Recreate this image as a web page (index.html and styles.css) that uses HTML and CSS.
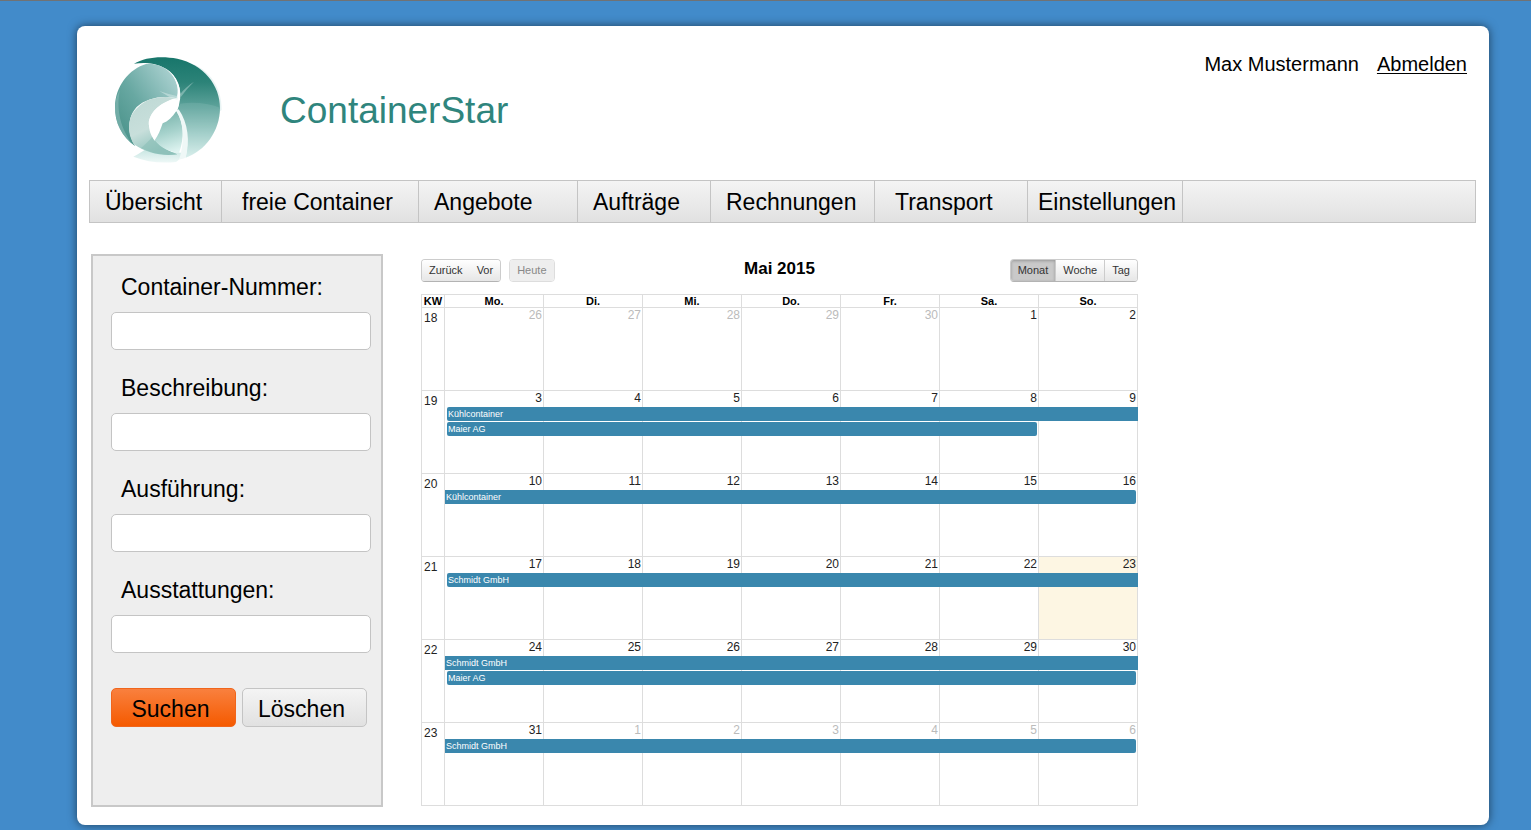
FILE: index.html
```html
<!DOCTYPE html>
<html lang="de">
<head>
<meta charset="utf-8">
<title>ContainerStar</title>
<link rel="stylesheet" href="styles.css">
</head>
<body>
<div class="page">
  <header class="header">
    <svg class="logo" viewBox="0 0 405 390" aria-hidden="true">
      <defs>
        <linearGradient id="dark" x1="0" y1="0" x2="0" y2="1">
          <stop offset="0" stop-color="#17766b"/><stop offset="0.25" stop-color="#2c8378"/><stop offset="0.5" stop-color="#5ea39b"/><stop offset="0.75" stop-color="#9ccbc5"/><stop offset="1" stop-color="#dcf1ee"/>
        </linearGradient>
        <linearGradient id="left" x1="0.9" y1="0.1" x2="0.1" y2="0.8">
          <stop offset="0" stop-color="#a9d0cf"/><stop offset="0.6" stop-color="#68a8a2"/><stop offset="1" stop-color="#4f968e"/>
        </linearGradient>
        <linearGradient id="pale" x1="0" y1="0" x2="0.4" y2="1">
          <stop offset="0" stop-color="#bdd8d4"/><stop offset="0.6" stop-color="#c8dfdb"/><stop offset="1" stop-color="#8fc3bc"/>
        </linearGradient>
        <linearGradient id="petal" x1="0.4" y1="0" x2="0.6" y2="1">
          <stop offset="0" stop-color="#78b3ab"/><stop offset="0.5" stop-color="#a6d2cc"/><stop offset="1" stop-color="#dff4f1"/>
        </linearGradient>
        <linearGradient id="base" x1="0" y1="0" x2="0" y2="1">
          <stop offset="0" stop-color="#b9dfda"/><stop offset="1" stop-color="#eef8f7"/>
        </linearGradient>
      </defs>
      <path d="M280 58C330 78 366 130 365 195L358 200C358 140 330 90 280 58Z" fill="#e9f4f4"/>
      <path d="M102 56C135 36 185 32 232 41C310 58 361 120 360 190C359 260 315 318 257 338C267 290 263 235 232 194C250 150 241 106 208 78C178 55 140 50 102 56Z" fill="url(#dark)"/>
      <path d="M240 176C280 170 325 174 360 188C359 260 315 318 257 338C267 290 263 235 232 194Z" fill="#c9e6e2" opacity="0.14"/>
      <path d="M140 56C185 54 222 80 233 125C236 142 235 155 230 160C190 150 140 158 110 186C83 215 80 262 106 304C65 275 44 232 45 185C46 125 85 72 140 56Z" fill="url(#left)"/>
      <path d="M60 135C50 180 55 240 96 296C60 265 45 227 45 185C46 166 51 150 60 135Z" fill="#8fc0bb" opacity="0.5"/>
      <path d="M208 78C240 106 248 148 232 185L229 162C237 140 235 108 208 78Z" fill="#fff"/>
      <path d="M100 335C120 325 140 312 155 298C185 316 210 322 248 324C243 338 237 346 228 351C180 356 140 350 100 335Z" fill="url(#base)"/>
      <path d="M232 160C190 150 140 158 112 188C82 215 80 262 102 298C140 326 190 334 232 328C180 310 145 275 147 235C149 200 185 170 232 160Z" fill="url(#pale)"/>
      <path d="M146 240C150 280 180 310 232 328C195 331 155 324 123 309C148 290 168 264 178 240Z" fill="#8dc0b9" opacity="0.65"/>
      <path d="M235 158C190 166 148 198 146 235C147 258 154 274 164 287C176 272 180 250 188 235C212 226 232 207 237 178Z" fill="#fff"/>
      <path d="M229 198C217 217 204 229 188 235C182 253 174 273 164 286C182 308 207 321 237 324C254 278 252 232 229 198Z" fill="url(#petal)"/>
      <path d="M229 198L236 193C265 235 270 290 257 338C248 343 242 340 237 345C255 290 252 235 229 198Z" fill="#eff8f7"/>
      <path d="M178 138Q206 148 234 154L232 164L212 158Z" fill="#d7ecea" opacity="0.5"/>
      <path d="M240 148C253 132 267 119 282 110Q259 132 242 157Z" fill="#b3d6d2" opacity="0.5"/>
    </svg>
    <h1 class="brand">ContainerStar</h1>
    <div class="account">
      <span>Max Mustermann</span>
      <a class="logout" href="#">Abmelden</a>
    </div>
  </header>

  <nav class="nav">
    <a href="#">Übersicht</a>
    <a class="inset" href="#">freie Container</a>
    <a href="#">Angebote</a>
    <a href="#">Aufträge</a>
    <a href="#">Rechnungen</a>
    <a class="inset" href="#">Transport</a>
    <a class="tight" href="#">Einstellungen</a>
  </nav>

  <main class="main">
    <form class="search">
      <div class="field"><label for="number">Container-Nummer:</label><input id="number" type="text"></div>
      <div class="field"><label for="description">Beschreibung:</label><input id="description" type="text"></div>
      <div class="field"><label for="version">Ausführung:</label><input id="version" type="text"></div>
      <div class="field"><label for="equipment">Ausstattungen:</label><input id="equipment" type="text"></div>
      <div class="actions">
        <button class="action primary" type="button">Suchen</button>
        <button class="action" type="reset">Löschen</button>
      </div>
    </form>

    <section class="calendar">
      <div class="toolbar">
        <div class="tools">
          <div class="group plain"><button type="button">Zurück</button><button type="button">Vor</button></div>
          <div class="group off"><button type="button" disabled>Heute</button></div>
        </div>
        <h2 class="month">Mai 2015</h2>
        <div class="tools end">
          <div class="group"><button class="active" type="button">Monat</button><button type="button">Woche</button><button type="button">Tag</button></div>
        </div>
      </div>
      <table class="grid">
        <thead>
          <tr><th class="kw">KW</th><th>Mo.</th><th>Di.</th><th>Mi.</th><th>Do.</th><th>Fr.</th><th>Sa.</th><th>So.</th></tr>
        </thead>
        <tbody>
          <tr><th>18</th><td class="other">26</td><td class="other">27</td><td class="other">28</td><td class="other">29</td><td class="other">30</td><td>1</td><td>2</td></tr>
          <tr><th>19</th><td>3<div class="event starts">Kühlcontainer</div><div class="event starts ends days6">Maier AG</div></td><td>4</td><td>5</td><td>6</td><td>7</td><td>8</td><td>9</td></tr>
          <tr><th>20</th><td>10<div class="event ends">Kühlcontainer</div></td><td>11</td><td>12</td><td>13</td><td>14</td><td>15</td><td>16</td></tr>
          <tr><th>21</th><td>17<div class="event starts">Schmidt GmbH</div></td><td>18</td><td>19</td><td>20</td><td>21</td><td>22</td><td class="today">23</td></tr>
          <tr><th>22</th><td>24<div class="event">Schmidt GmbH</div><div class="event starts ends">Maier AG</div></td><td>25</td><td>26</td><td>27</td><td>28</td><td>29</td><td>30</td></tr>
          <tr><th>23</th><td>31<div class="event ends">Schmidt GmbH</div></td><td class="other">1</td><td class="other">2</td><td class="other">3</td><td class="other">4</td><td class="other">5</td><td class="other">6</td></tr>
        </tbody>
      </table>
    </section>
  </main>
</div>
</body>
</html>
```
FILE: styles.css
```css
* { box-sizing: border-box; }

body {
  margin: 0;
  padding: 25px 42px 5px 77px;
  border-top: 1px solid #707274;
  background: #428bca;
  color: #000;
  font-family: "Liberation Sans", Arial, sans-serif;
}

button, input { font-family: inherit; }

.page {
  padding: 0 13px 18px 12px;
  border-radius: 8px;
  background: #fff;
  box-shadow: 0 0 10px rgba(0, 0, 0, 0.55);
}

/* Header */
.header {
  display: flex;
  align-items: flex-start;
  height: 154px;
  padding: 19px 9px 0 11px;
}

.logo { width: 135px; height: 130px; }

.brand {
  margin: 45px 0 0 45px;
  color: #2f857d;
  font-size: 37px;
  font-weight: normal;
  line-height: 42px;
}

.account {
  display: flex;
  gap: 18px;
  margin-left: auto;
  padding-top: 7px;
  font-size: 20px;
  line-height: 24px;
}

.logout {
  color: #000;
  text-decoration-thickness: 1px;
  text-underline-offset: 2px;
}

/* Navigation */
.nav {
  display: grid;
  grid-template-columns: 132px 197px 159px 133px 164px 153px 155px 1fr;
  border: 1px solid #c4c4c4;
  background: linear-gradient(#f4f4f4, #e1e1e1);
}

.nav a {
  padding-top: 1px;
  padding-left: 15px;
  border-right: 1px solid #c4c4c4;
  color: #000;
  font-size: 23px;
  line-height: 40px;
  text-decoration: none;
  white-space: nowrap;
}

.nav .inset { padding-left: 20px; }
.nav .tight { padding-left: 10px; }

.main {
  display: flex;
  align-items: stretch;
  gap: 38px;
  margin: 31px 0 0 2px;
}

/* Search form */
.search {
  flex: 0 0 292px;
  padding: 16px 10px 0 18px;
  border: 2px solid #c8c8c8;
  background: #eee;
}

.field { margin-bottom: 23px; }

.field label {
  display: block;
  margin-bottom: 10px;
  padding-left: 10px;
  font-size: 23px;
  line-height: 30px;
}

.field input {
  display: block;
  width: 100%;
  height: 38px;
  padding: 0 10px;
  border: 1px solid #c4c4c4;
  border-radius: 5px;
  background: #fff;
  font-size: 20px;
}

.actions {
  display: flex;
  gap: 6px;
  padding: 12px 4px 0 0;
}

.action {
  flex: 1;
  height: 39px;
  padding: 0 6px 0 0;
  border: 1px solid #c4c4c4;
  border-radius: 5px;
  background: linear-gradient(#f4f4f4, #e1e1e1);
  color: #000;
  font-size: 23px;
  line-height: 41px;
}

.primary {
  border-color: #f0651c;
  background: linear-gradient(#f9803e, #f55a00);
}

/* Calendar */
.calendar {
  flex: 0 1 717px;
  min-width: 0;
  padding: 5px 0 1px;
}

.toolbar {
  display: grid;
  grid-template-columns: 1fr auto 1fr;
  height: 35px;
}

.tools {
  display: flex;
  align-items: flex-start;
  gap: 8px;
}

.end { justify-content: flex-end; }

.group {
  display: flex;
  overflow: hidden;
  border: 1px solid #ccc;
  border-bottom-color: #b3b3b3;
  border-radius: 4px;
}

.group button {
  padding: 0 7px;
  border: 0;
  border-left: 1px solid #ccc;
  background: linear-gradient(#fff, #e6e6e6);
  color: #333;
  font-size: 11px;
  line-height: 21px;
}

.group button:first-child { border-left: 0; }
.plain button { border-left: 0; }
.off { border-color: #ddd; }
.off button { background: #eee; color: #888; }
.group .active { background: #c9c9c9; box-shadow: inset 0 1px 3px rgba(0, 0, 0, 0.25); }

.month {
  margin: 0;
  font-size: 17px;
  line-height: 19px;
}

.grid {
  width: 100%;
  table-layout: fixed;
  border-collapse: collapse;
}

.grid th, .grid td {
  padding: 0;
  border: 1px solid #ddd;
}

.grid thead th {
  font-size: 11px;
  line-height: 12px;
}

.grid .kw { width: 23px; }

.grid tbody th {
  padding: 4px 0 0 2px;
  color: #222;
  font-size: 12px;
  font-weight: normal;
  line-height: 12px;
  text-align: left;
  vertical-align: top;
}

.grid td {
  height: 83px;
  padding-top: 1px;
  padding-right: 1px;
  color: #222;
  font-size: 12px;
  line-height: 13px;
  text-align: right;
  vertical-align: top;
}

.grid .other { color: #bbb; }
.grid .today { background: #fdf6e3; }

/* A bar starts in the Monday cell and runs over the days to its right. */
.event {
  --days: 7;
  --before: 0px;
  --after: 0px;
  position: relative;
  z-index: 1;
  width: calc((100% + 2px) * var(--days) - var(--before) - var(--after));
  height: 14px;
  margin: 2px 0 0 var(--before);
  padding-left: 1px;
  background: #3a87ad;
  color: #fff;
  font-size: 9px;
  line-height: 14px;
  text-align: left;
}

.event + .event { margin-top: 1px; }
.days6 { --days: 6; }
.starts { --before: 2px; border-radius: 2px 0 0 2px; }
.ends { --after: 2px; border-radius: 0 2px 2px 0; }
.starts.ends { border-radius: 2px; }
```
